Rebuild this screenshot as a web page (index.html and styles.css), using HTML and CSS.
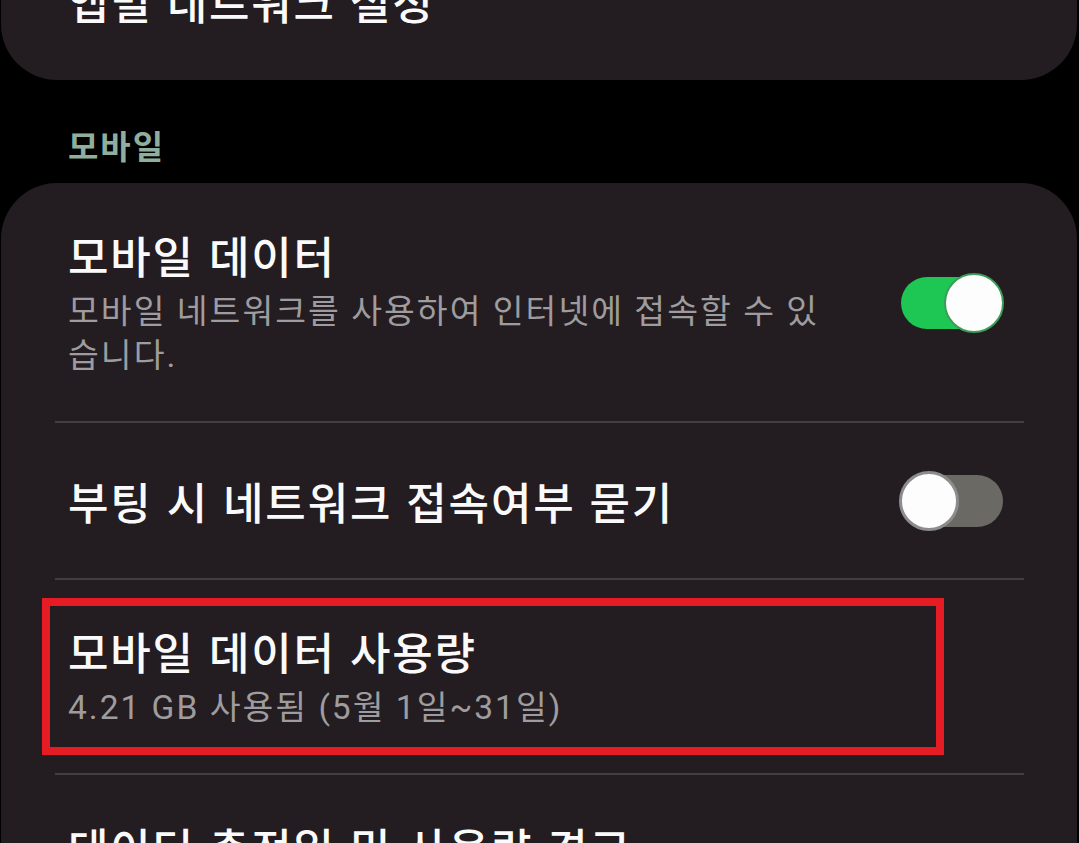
FILE: index.html
```html
<!DOCTYPE html>
<html lang="ko">
<head>
<meta charset="utf-8">
<title>모바일 네트워크</title>
<link rel="stylesheet" href="styles.css">
</head>
<body>
<div class="screen">
  <div class="card card-top">
    <div class="row row-single-top">
      <div class="text"><div class="title">앱별 네트워크 설정</div></div>
    </div>
  </div>

  <div class="section-header">모바일</div>

  <div class="card">
    <div class="row row-1">
      <div class="text">
        <div class="title">모바일 데이터</div>
        <div class="sub">모바일 네트워크를 사용하여 인터넷에 접속할 수 있습니다.</div>
      </div>
      <div class="switch on"><span class="thumb"></span></div>
    </div>
    <div class="divider"></div>
    <div class="row row-2">
      <div class="text">
        <div class="title">부팅 시 네트워크 접속여부 묻기</div>
      </div>
      <div class="switch off"><span class="thumb"></span></div>
    </div>
    <div class="divider"></div>
    <div class="row row-3">
      <div class="text">
        <div class="title">모바일 데이터 사용량</div>
        <div class="sub">4.21 GB 사용됨 (5월 1일~31일)</div>
      </div>
      <div class="highlight"></div>
    </div>
    <div class="divider"></div>
    <div class="row row-4">
      <div class="text">
        <div class="title">데이터 충전일 및 사용량 경고</div>
      </div>
    </div>
  </div>
</div>
</body>
</html>
```

FILE: styles.css
```css
* { box-sizing: border-box; }

html, body {
  margin: 0;
  padding: 0;
  background: #000;
  height: 100%;
  overflow: hidden;
}

body {
  font-family: "Noto Sans CJK KR", "Noto Sans", sans-serif;
  color: #fafafa;
}

.screen {
  padding: 0 2px 0 1px;
}

.card {
  background: #231c21;
  border-radius: 56px;
}

.card-top {
  margin-top: -80px;
  padding-top: 53px;
  padding-bottom: 51px;
}

.row {
  position: relative;
  display: flex;
  align-items: center;
  padding-left: 67px;
  padding-right: 74px;
}

.row-single-top { padding-top: 0; padding-bottom: 0; }

.text {
  flex: 1;
  margin-right: 72px;
}

.title {
  font-size: 44px;
  line-height: 56px;
  font-weight: 500;
  letter-spacing: 1.8px;
  color: #fafafa;
  white-space: nowrap;
}

.sub {
  margin-top: 7px;
  font-family: "Roboto", "Noto Sans CJK KR", sans-serif;
  font-size: 33.5px;
  line-height: 44px;
  letter-spacing: 2px;
  color: #9e9c9e;
}

.section-header {
  padding: 43px 0 16px 67px;
  font-size: 33px;
  line-height: 44px;
  font-weight: 700;
  letter-spacing: 2px;
  color: #8fae9d;
}

.row-1 { padding-top: 44px; padding-bottom: 43px; }
.row-2 { padding-top: 50px; padding-bottom: 49px; }
.row-3 { padding-top: 43px; padding-bottom: 43px; }
.row-4 { padding-top: 44px; padding-bottom: 40px; }

.divider {
  height: 2px;
  margin: 0 53px 0 54px;
  background: #433c41;
}

.switch {
  position: relative;
  width: 102px;
  height: 52px;
  border-radius: 26px;
  flex: none;
}

.switch.on { background: #1ec653; }
.switch.off { background: #6a6964; }

.thumb {
  position: absolute;
  top: -4px;
  width: 60px;
  height: 60px;
  border-radius: 50%;
  background: #fdfdfd;
}

.switch.on .thumb {
  right: -1px;
  border: 2px solid #3d9c58;
}

.switch.off .thumb {
  left: -2px;
  border: 3px solid #8c8b8d;
}

.highlight {
  position: absolute;
  left: 41px;
  right: 133px;
  top: 18px;
  bottom: 18px;
  border: 8px solid #e61c24;
  pointer-events: none;
}
```
